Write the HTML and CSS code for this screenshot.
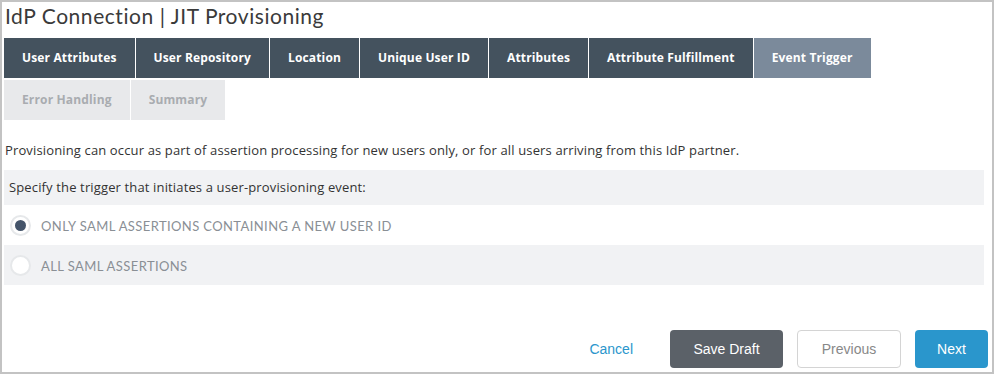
FILE: index.html
```html
<!DOCTYPE html>
<html lang="en">
<head>
  <meta charset="UTF-8" />
  <title>IdP Connection | JIT Provisioning</title>
  <link rel="stylesheet" href="styles.css">
</head>
<body>
  <div class="page">
    <h1 class="title">IdP Connection | JIT Provisioning</h1>

    <div class="tabs">
      <div class="tab">User Attributes</div>
      <div class="tab">User Repository</div>
      <div class="tab">Location</div>
      <div class="tab">Unique User ID</div>
      <div class="tab">Attributes</div>
      <div class="tab">Attribute Fulfillment</div>
      <div class="tab tab-current">Event Trigger</div>
      <div class="tab tab-next">Error Handling</div>
      <div class="tab tab-next">Summary</div>
    </div>

    <p class="intro">Provisioning can occur as part of assertion processing for new users only, or for all users arriving from this IdP partner.</p>

    <div class="question">Specify the trigger that initiates a user-provisioning event:</div>
    <label class="option">
      <span class="radio radio-on"></span>
      ONLY SAML ASSERTIONS CONTAINING A NEW USER ID
    </label>
    <label class="option option-alt">
      <span class="radio"></span>
      ALL SAML ASSERTIONS
    </label>

    <div class="actions">
      <a class="link-cancel" href="#">Cancel</a>
      <button class="btn btn-dark">Save Draft</button>
      <button class="btn btn-plain">Previous</button>
      <button class="btn btn-blue">Next</button>
    </div>
  </div>
</body>
</html>
```

FILE: styles.css
```css
html, body {
  margin: 0;
  background-color: #ffffff;
}
.page {
  box-sizing: border-box;
  width: 994px;
  height: 374px;
  border: 2px solid #c3c3c3;
  padding: 0 8px 0 2px;
  font-family: "Open Sans", Arial, sans-serif;
  color: #333;
  display: flex;
  flex-direction: column;
}
.title {
  font-family: Lato, sans-serif;
  font-weight: normal;
  font-size: 21px;
  letter-spacing: 0.55px;
  color: #3a3a3a;
  margin: 1px 0 0 1px;
  height: 35px;
  line-height: 26px;
}
.tabs {
  display: flex;
  flex-wrap: wrap;
  gap: 2px 1px;
  width: 900px;
}
.tab {
  height: 40px;
  line-height: 40px;
  padding: 0 18px;
  background-color: #44525e;
  color: #ffffff;
  font-family: "Open Sans", Arial, sans-serif;
  font-weight: bold;
  font-size: 12px;
  letter-spacing: 0.15px;
}
.tab-current {
  background-color: #7b8a9b;
}
.tab-next {
  background-color: #e8e9eb;
  color: #a9acb0;
}
.intro {
  font-size: 13px;
  letter-spacing: 0.14px;
  margin: 21px 0 0 1px;
  line-height: 18px;
  color: #333;
}
.question {
  margin-top: 11px;
  background-color: #f1f2f4;
  height: 35px;
  line-height: 35px;
  padding-left: 5px;
  font-size: 13px;
  letter-spacing: 0.14px;
  color: #333;
}
.option {
  display: flex;
  align-items: center;
  height: 40px;
  padding-left: 6px;
  padding-top: 1px;
  box-sizing: border-box;
  font-family: Lato, sans-serif;
  font-size: 13px;
  color: #8a8f95;
  letter-spacing: 0.4px;
}
.option-alt {
  background-color: #f1f2f4;
}
.radio {
  box-sizing: border-box;
  width: 21px;
  height: 21px;
  border-radius: 50%;
  background-color: #ffffff;
  border: 2px solid #e6e8ea;
  margin-right: 10px;
  position: relative;
}
.radio-on::after {
  content: "";
  position: absolute;
  left: 3px;
  top: 3px;
  width: 11px;
  height: 11px;
  border-radius: 50%;
  background-color: #44546a;
}
.actions {
  margin-top: auto;
  margin-bottom: 4px;
  display: flex;
  justify-content: flex-end;
  align-items: center;
  gap: 14px;
  margin-right: -4px;
  font-family: "Liberation Sans", Arial, sans-serif;
}
.link-cancel {
  color: #2a96cc;
  text-decoration: none;
  font-size: 14px;
  margin-right: 23px;
}
.btn {
  font-family: "Liberation Sans", Arial, sans-serif;
  font-size: 14px;
  height: 38px;
  border-radius: 4px;
  border: 1px solid transparent;
  cursor: pointer;
}
.btn-dark {
  width: 113px;
  background-color: #5b6168;
  color: #ffffff;
}
.btn-plain {
  width: 104px;
  background-color: #ffffff;
  border-color: #d4d4d4;
  color: #888;
}
.btn-blue {
  width: 73px;
  background-color: #2a96cc;
  color: #ffffff;
}
```
